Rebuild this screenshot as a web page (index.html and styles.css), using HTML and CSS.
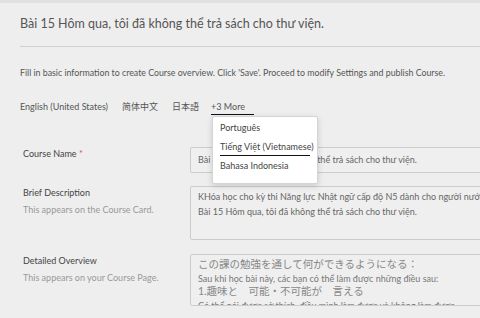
FILE: index.html
```html
<!DOCTYPE html>
<html lang="vi">
<head>
<meta charset="UTF-8">
<meta name="viewport" content="width=device-width, initial-scale=1.0">
<title>Course Overview</title>
<link rel="stylesheet" href="styles.css">
</head>
<body>

<div class="top-strip"></div>

<div class="page">
    <!-- 标题 -->
    <div class="page-head">
        <h1>Bài 15 Hôm qua, tôi đã không thể trả sách cho thư viện.</h1>
    </div>

    <p class="notice">Fill in basic information to create Course overview. Click 'Save'. Proceed to modify Settings and publish Course.</p>

    <!-- 语言标签 -->
    <div class="lang-tabs">
        <span class="lang-tab">English (United States)</span>
        <span class="lang-tab">简体中文</span>
        <span class="lang-tab">日本語</span>
        <div class="lang-more">
            <span class="lang-tab lang-tab--active">+3 More</span>
            <ul class="lang-menu">
                <li>Português</li>
                <li class="is-current">Tiếng Việt (Vietnamese)</li>
                <li>Bahasa Indonesia</li>
            </ul>
        </div>
    </div>

    <!-- 表单 -->
    <div class="form">
        <div class="form-row">
            <div class="form-label">
                <div class="label-title">Course Name <span class="req">*</span></div>
            </div>
            <div class="form-field">
                <div class="input">Bài 15 Hôm qua, tôi đã không thể trả sách cho thư viện.</div>
            </div>
        </div>

        <div class="form-row form-row--tall">
            <div class="form-label">
                <div class="label-title">Brief Description</div>
                <div class="label-sub">This appears on the Course Card.</div>
            </div>
            <div class="form-field">
                <div class="textarea textarea--brief">
                    <div>KHóa học cho kỳ thi Năng lực Nhật ngữ cấp độ N5 dành cho người nước ngoài.</div>
                    <div>Bài 15 Hôm qua, tôi đã không thể trả sách cho thư viện.</div>
                </div>
            </div>
        </div>

        <div class="form-row">
            <div class="form-label">
                <div class="label-title">Detailed Overview</div>
                <div class="label-sub">This appears on your Course Page.</div>
            </div>
            <div class="form-field">
                <div class="textarea textarea--detail">
                    <div class="jp">この課の勉強を通して何ができるようになる：</div>
                    <div>Sau khi học bài này, các bạn có thể làm được những điều sau:</div>
                    <div class="jp">1.趣味と　可能・不可能が　言える</div>
                    <div>Có thể nói được sở thích, điều mình làm được và không làm được.</div>
                </div>
            </div>
        </div>
    </div>
</div>

</body>
</html>
```

FILE: styles.css
```css
/* --- 全局 --- */
html, body {
    margin: 0;
    padding: 0;
    background-color: #eeeeee;
    overflow: hidden;
}

body {
    font-family: Lato, "Noto Sans", "Noto Sans CJK JP", sans-serif;
    color: #555;
    font-size: 9px;
}

.top-strip {
    height: 3px;
    background-color: #e0e0e0;
}

.page {
    width: 600px;
    padding-left: 20px;
}

/* --- 标题 --- */
.page-head {
    border-bottom: 1px solid #cfcfcf;
    padding: 12px 0 14px;
}

.page-head h1 {
    margin: 0;
    font-size: 12.5px;
    font-weight: normal;
    line-height: 17px;
    color: #555;
}

.notice {
    margin: 20px 0 0;
    font-size: 8.8px;
    line-height: 12px;
    color: #555;
}

/* --- 语言标签 --- */
.lang-tabs {
    display: flex;
    align-items: flex-start;
    gap: 14px;
    margin-top: 22px;
    line-height: 12px;
}

.lang-tab {
    display: inline-block;
    padding-bottom: 1px;
    color: #555;
}

.lang-more {
    position: relative;
    margin-left: -2px;
}

.lang-tab--active {
    border-bottom: 1.5px solid #111;
    padding-right: 9px;
}

.lang-menu {
    position: absolute;
    top: 15px;
    left: 1px;
    width: 90px;
    margin: 0;
    padding: 4px 7px 5px;
    list-style: none;
    background-color: #fff;
    border: 1px solid #d4d4d4;
    border-radius: 2px;
    box-shadow: 0 2px 6px rgba(0, 0, 0, 0.15);
    z-index: 5;
}

.lang-menu li {
    line-height: 12px;
    padding: 1px 0 2px;
    margin-bottom: 4px;
    color: #444;
    white-space: nowrap;
}

.lang-menu li.is-current {
    border-bottom: 1.5px solid #111;
    margin-bottom: 3px;
}

/* --- 表单 --- */
.form {
    margin-top: 32px;
}

.form-row {
    display: grid;
    grid-template-columns: 170px 1fr;
    margin-bottom: 13px;
}

.form-row--tall {
    margin-bottom: 14px;
}

.form-label {
    padding: 1px 0 0 3px;
    line-height: 12px;
}

.label-title {
    color: #444;
}

.req {
    color: #d9534f;
}

.label-sub {
    margin-top: 5px;
    color: #999;
}

.input,
.textarea {
    border: 1px solid #cccccc;
    border-radius: 2px;
    background-color: #efefef;
    color: #666;
    padding: 0 7px;
    overflow: hidden;
    white-space: nowrap;
}

.input {
    height: 24px;
    line-height: 24px;
}

.textarea--brief {
    height: 54px;
    padding-top: 2px;
    line-height: 15px;
    box-sizing: border-box;
}

.textarea--detail {
    height: 52px;
    padding-top: 3px;
    line-height: 13.5px;
    box-sizing: border-box;
    color: #777;
}

.textarea .jp {
    font-size: 10.5px;
    color: #888;
}
```
